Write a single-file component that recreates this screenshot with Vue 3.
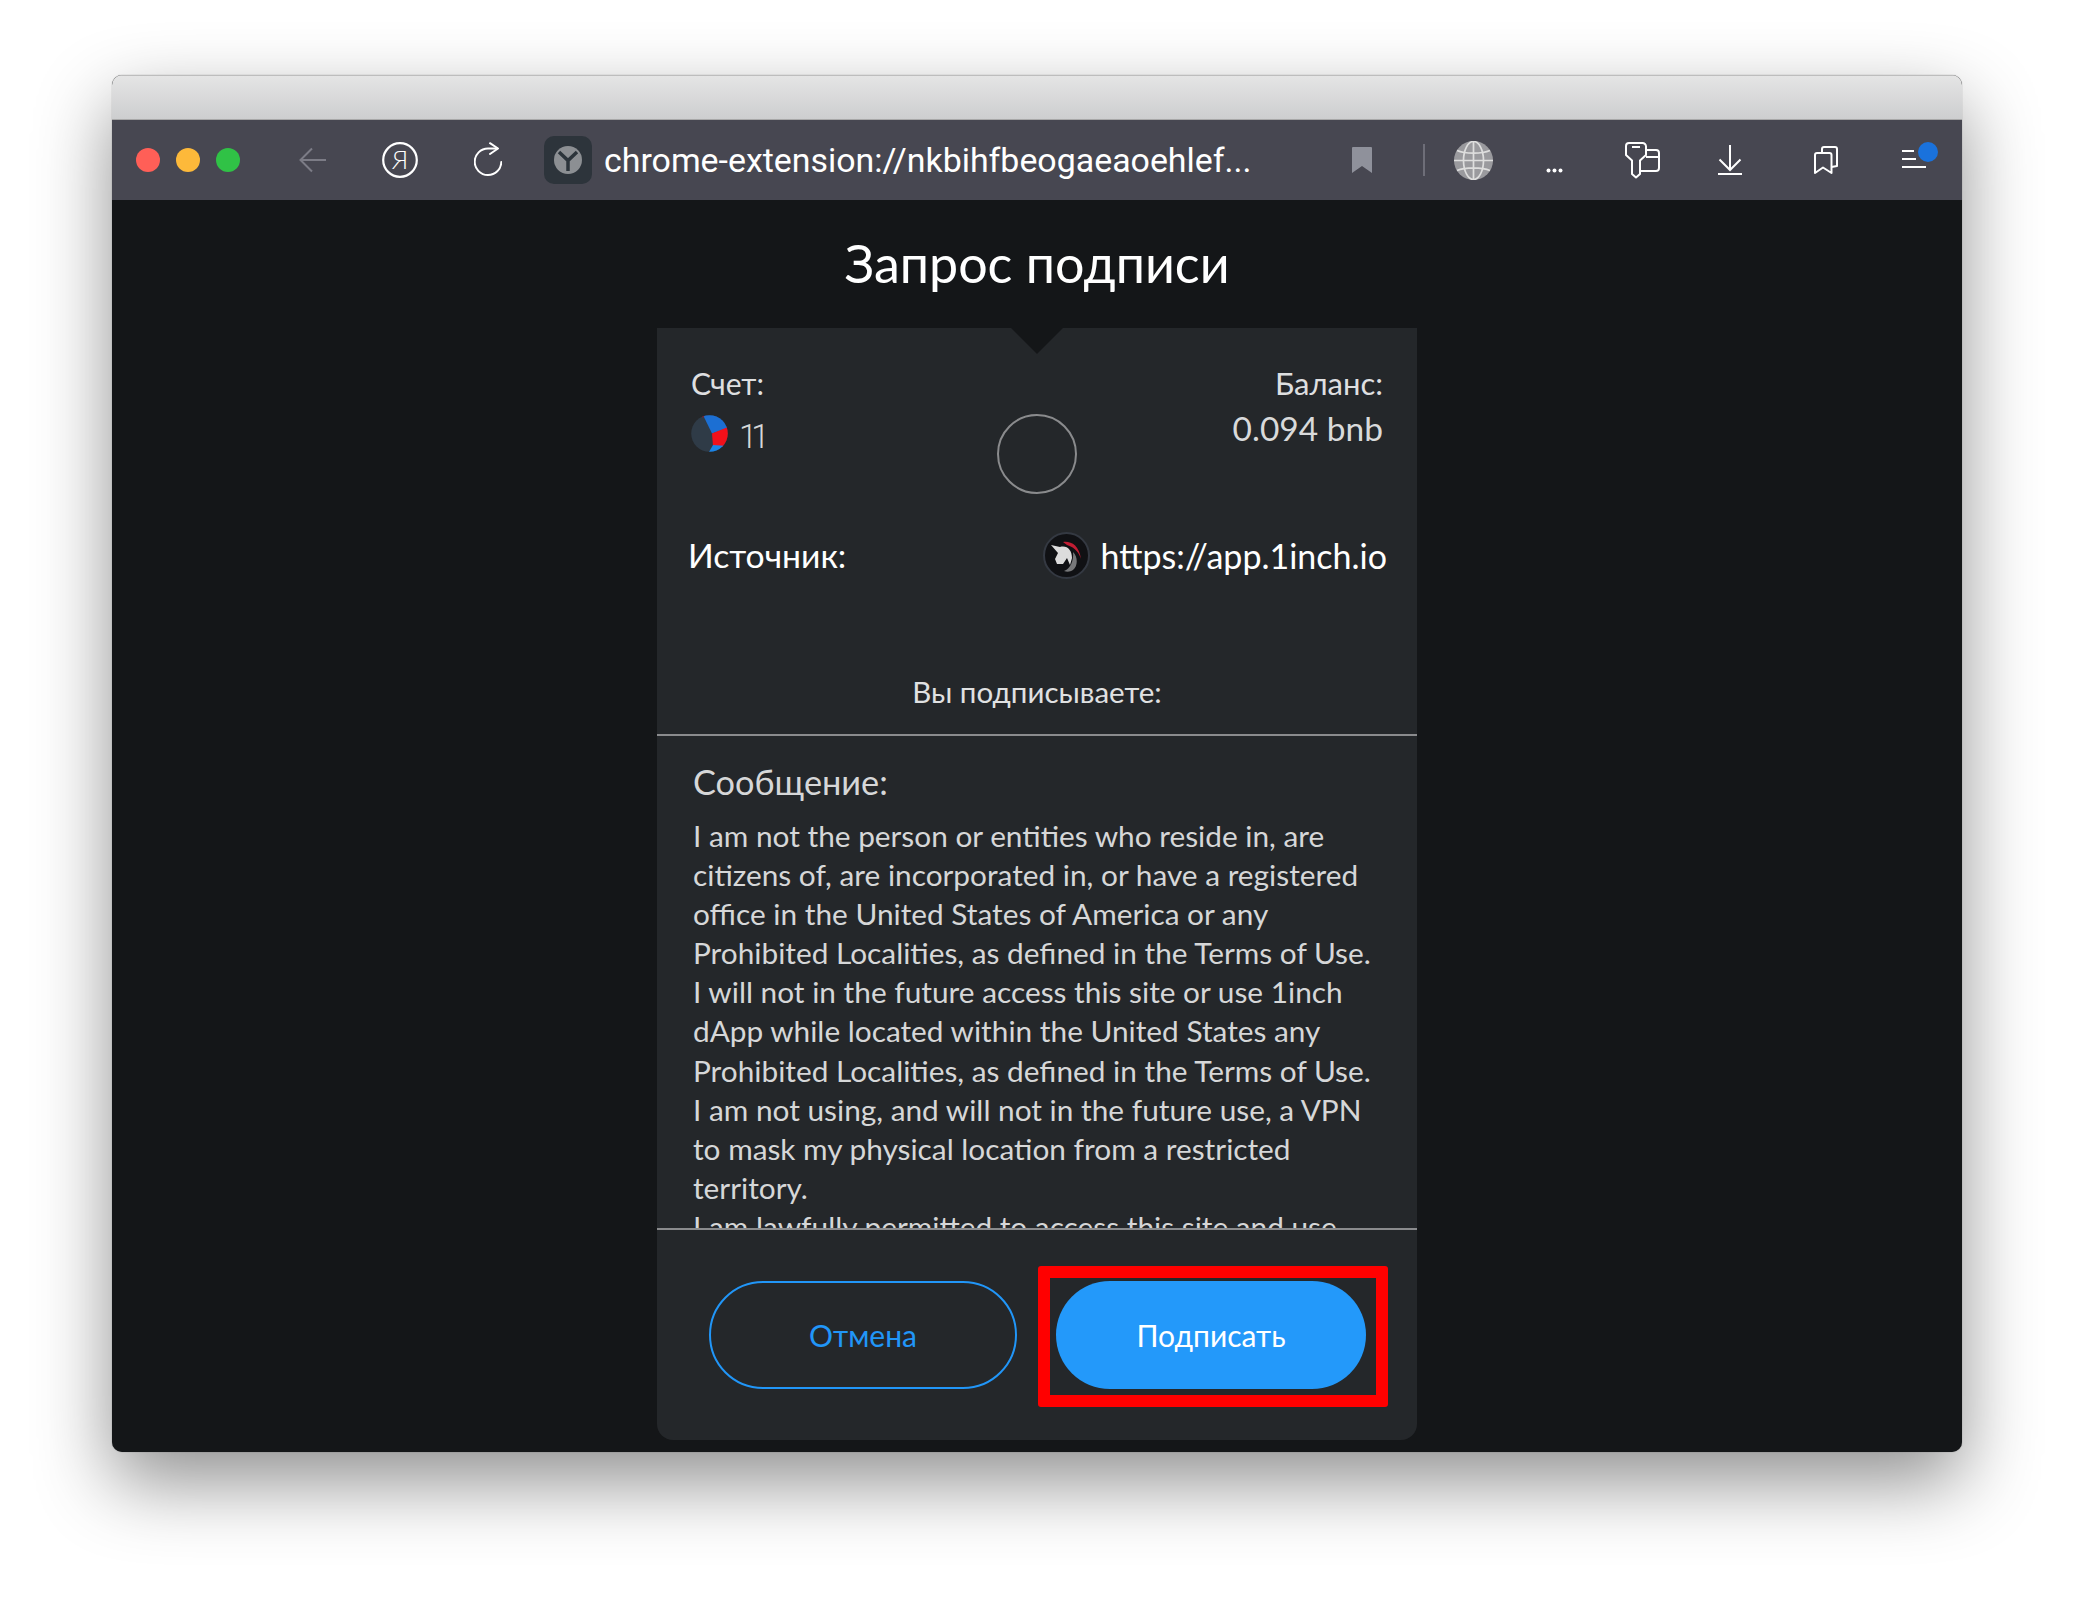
<script setup>
const lines = [
  'I am not the person or entities who reside in, are',
  'citizens of, are incorporated in, or have a registered',
  'office in the United States of America or any',
  'Prohibited Localities, as defined in the Terms of Use.',
  'I will not in the future access this site or use 1inch',
  'dApp while located within the United States any',
  'Prohibited Localities, as defined in the Terms of Use.',
  'I am not using, and will not in the future use, a VPN',
  'to mask my physical location from a restricted',
  'territory.',
  'I am lawfully permitted to access this site and use'
]
</script>

<template>
  <div class="page">
    <div class="window">
      <div class="titlebar"></div>
      <div class="toolbar">
        <span class="light red"></span>
        <span class="light amber"></span>
        <span class="light green"></span>

        <svg class="i-back" viewBox="0 0 28 26" fill="none" stroke="#7c7c86" stroke-width="2">
          <path d="M27 13H2M13 1.500L1.500 13L13 24.500" />
        </svg>
        <svg class="i-ya" viewBox="0 0 36 36" fill="none">
          <circle cx="18" cy="18" r="16.800" stroke="#fff" stroke-width="2.200" />
          <text x="18" y="27" text-anchor="middle" class="ya-letter">Я</text>
        </svg>
        <svg class="i-reload" viewBox="0 0 28 35" fill="none" stroke="#fff" stroke-width="2" stroke-linecap="round" stroke-linejoin="round">
          <path d="M23 6.500H14A13.300 13.300 0 1 0 27.300 20" />
          <path d="M16 1.200L24 6.500L16 12" />
        </svg>
        <div class="favicon">
          <svg viewBox="0 0 28 28" width="28" height="28">
            <circle cx="14" cy="14" r="14" fill="#8c8f93" />
            <path d="M5 6L14 14.500L23 6M14 14.500V25" fill="none" stroke="#2c343b" stroke-width="3.500" />
          </svg>
        </div>
        <div class="url">chrome-extension://nkbihfbeogaeaoehlef...</div>

        <svg class="i-mark" viewBox="0 0 20 26"><path d="M1 0H19A1 1 0 0 1 20 1V26L10 19L0 26V1A1 1 0 0 1 1 0Z" fill="#8f919b" /></svg>
        <span class="sep"></span>
        <svg class="i-globe" viewBox="0 0 39 39" fill="none">
          <circle cx="19.500" cy="19.500" r="19.500" fill="#9a9a9e" />
          <g stroke="#dedede" stroke-width="1.700">
            <path d="M0 19.500H39M19.500 0V39M3 9.500C11 13 28 13 36 9.500M3 29.500C11 26 28 26 36 29.500" />
            <ellipse cx="19.500" cy="19.500" rx="10" ry="19" />
          </g>
        </svg>
        <svg class="i-dots" viewBox="0 0 17 5" fill="#fff">
          <circle cx="2.500" cy="2.500" r="2" /><circle cx="8.500" cy="2.500" r="2" /><circle cx="14.500" cy="2.500" r="2" />
        </svg>
        <svg class="i-key" viewBox="0 0 35 37" fill="none" stroke="#fff" stroke-width="2" stroke-linejoin="round">
          <path d="M4 1H17.500A3.500 3.500 0 0 1 21 4.500V13L15 18.500V32L11 35.500L7 32V18.500L1 13V4A3 3 0 0 1 4 1Z" />
          <path d="M7 5H15M21 8H31A3 3 0 0 1 34 11V26A3 3 0 0 1 31 29H15M21 15H34" />
        </svg>
        <svg class="i-down" viewBox="0 0 24 30" fill="none" stroke="#fff" stroke-width="2">
          <path d="M12 0V24M1.500 14.500L12 25L22.500 14.500" /><path d="M0 29H24" />
        </svg>
        <svg class="i-books" viewBox="0 0 24 28" fill="none" stroke="#fff" stroke-width="2" stroke-linejoin="round">
          <path d="M1 27V9A2 2 0 0 1 3 7H15.500A2 2 0 0 1 17.500 9V27L9 21.500Z" />
          <path d="M8 7V3A2 2 0 0 1 10 1H21A2 2 0 0 1 23 3V20L17.500 21" />
        </svg>
        <div class="menu">
          <span class="bar short"></span>
          <span class="bar mid"></span>
          <span class="bar long"></span>
          <span class="dot"></span>
        </div>
      </div>

      <div class="content">
        <h1 class="title">Запрос подписи</h1>
        <div class="panel">
          <span class="notch"></span>
          <span class="ring"></span>

          <div class="account">
            <div class="acc-col">
              <div class="acc-label">Счет:</div>
              <div class="acc-name">
                <svg class="identicon" viewBox="0 0 37 37">
                  <defs><clipPath id="idc"><circle cx="18.500" cy="18.500" r="18.300" /></clipPath></defs>
                  <g clip-path="url(#idc)">
                    <rect width="37" height="37" fill="#2f3b47" />
                    <path d="M12 0H37V13L21 18.500Z" fill="#1c6fd3" />
                    <path d="M37 12L21 18.500L22 31L37 33Z" fill="#f2101a" />
                    <path d="M22 30L37 31V37H18Z" fill="#1b84e6" />
                    <path d="M10 0H14L12 3Z" fill="#8c1b2d" />
                  </g>
                </svg>
                <span class="acc-num">11</span>
              </div>
            </div>
            <div class="acc-col right">
              <div class="acc-label wide">Баланс:</div>
              <div class="balance">0.094 bnb</div>
            </div>
          </div>

          <div class="source">
            <span class="src-label">Источник:</span>
            <div class="origin">
              <svg class="avatar" viewBox="0 0 47 47">
                <circle cx="23.500" cy="23.500" r="22.500" fill="#101114" stroke="#343942" stroke-width="2" />
                <path d="M20 10C28 9 36 13 38 27C36 21 33 16 24 13Z" fill="#c11d33" />
                <path d="M30 20C35 25 35 34 30 38C27 40 24 40 21 39C27 37 31 29 30 20Z" fill="#77787a" />
                <path d="M8 13L17 15C24 13 29 18 29 26L27 33L24 26L20 32L14 32L12 27L15 21Z" fill="#dcdcdc" />
              </svg>
              <span class="src-url">https://app.1inch.io</span>
            </div>
          </div>

          <div class="signing">Вы подписываете:</div>

          <div class="message">
            <div class="msg-label">Сообщение:</div>
            <div v-for="(l, i) in lines" :key="i" class="msg-line">{{ l }}</div>
          </div>

          <div class="actions">
            <button class="btn ghost">Отмена</button>
            <div class="primary-wrap">
              <button class="btn primary">Подписать</button>
              <span class="highlight"></span>
            </div>
          </div>
        </div>
      </div>
    </div>
  </div>
</template>

<style>
html, body { margin: 0; background: #fff; }
</style>

<style scoped>
.page {
  width: 2074px;
  height: 1600px;
  padding: 75px 112px 0 112px;
  box-sizing: border-box;
  overflow: hidden;
  font-family: Lato, "Noto Sans", sans-serif;
}
.window {
  height: 1377px;
  border-radius: 10px;
  overflow: hidden;
  box-shadow: 0 30px 76px rgba(0, 0, 0, 0.44), 0 0 1px rgba(0, 0, 0, 0.5);
  display: flex;
  flex-direction: column;
  background: #141618;
}
.titlebar {
  height: 44px;
  flex: none;
  background: linear-gradient(#e5e5e5, #cdcecf);
  border-bottom: 1px solid #a8a8a8;
  box-shadow: inset 0 1px #bdbdbd;
}
.toolbar {
  height: 80px;
  flex: none;
  background: #474751;
  display: flex;
  align-items: center;
  padding-left: 24px;
}
.toolbar svg { flex: none; display: block; }
.light { width: 24px; height: 24px; border-radius: 50%; margin-right: 16px; flex: none; }
.red { background: #ff5f57; }
.amber { background: #fdb93a; }
.green { background: #30c246; margin-right: 0; }
.i-back { width: 28px; height: 26px; margin-left: 59px; }
.i-ya { width: 36px; height: 36px; margin-left: 55px; }
.ya-letter { font-family: Lato, sans-serif; font-weight: 300; font-size: 25px; fill: #fff; }
.i-reload { width: 28px; height: 35px; margin-left: 56px; margin-top: -2px; }
.favicon {
  width: 48px;
  height: 48px;
  margin-left: 42px;
  border-radius: 10px;
  background: #2d343b;
  display: flex;
  align-items: center;
  justify-content: center;
  flex: none;
}
.url {
  margin-left: 12px;
  width: 647px;
  color: #fff;
  font: 33.900px Roboto, sans-serif;
  white-space: nowrap;
}
.i-mark { width: 20px; height: 26px; margin-left: 101px; }
.sep { width: 2px; height: 32px; margin-left: 51px; background: #6e6e78; flex: none; }
.i-globe { width: 39px; height: 39px; margin-left: 29px; }
.i-dots { width: 17px; height: 5px; margin-left: 53px; margin-top: 20px; }
.i-key { width: 35px; height: 37px; margin-left: 62px; }
.i-down { width: 24px; height: 30px; margin-left: 58px; }
.i-books { width: 24px; height: 28px; margin-left: 72px; }
.menu { position: relative; width: 24px; height: 18px; margin-left: 64px; margin-top: -2px; display: flex; flex-direction: column; justify-content: space-between; flex: none; }
.bar { height: 2px; background: #fff; display: block; }
.short { width: 12px; }
.mid { width: 14px; }
.long { width: 24px; }
.dot { position: absolute; left: 16px; top: -8px; width: 20px; height: 20px; border-radius: 50%; background: #1a72dc; }

.content { flex: 1; display: flex; flex-direction: column; align-items: center; }
.title {
  margin: 0;
  height: 128px;
  line-height: 126px;
  color: #fff;
  font-size: 52px;
  font-weight: 400;
  flex: none;
}
.panel {
  position: relative;
  width: 760px;
  height: 1112px;
  flex: none;
  background: #24272a;
  border-radius: 0 0 16px 16px;
}
.notch {
  position: absolute;
  left: 354px;
  top: 0;
  border-left: 26px solid transparent;
  border-right: 26px solid transparent;
  border-top: 26px solid #141618;
}
.ring {
  position: absolute;
  left: 340px;
  top: 86px;
  width: 80px;
  height: 80px;
  box-sizing: border-box;
  border: 2px solid #8a8b8d;
  border-radius: 50%;
}
.account {
  height: 169px;
  padding: 39px 34px 0;
  box-sizing: border-box;
  display: flex;
  justify-content: space-between;
}
.acc-label { font-size: 30px; line-height: 32px; color: #dedfe0; }
.acc-label.wide { font-size: 31px; }
.acc-name { display: flex; align-items: center; height: 37px; margin-top: 16px; }
.identicon { width: 37px; height: 37px; }
.acc-num { margin-left: 11px; margin-top: 6px; font: 300 33px/37px Roboto, sans-serif; letter-spacing: -6px; color: #d6d7d8; }
.acc-col.right { text-align: right; }
.balance { margin-top: 10px; font-size: 33.500px; line-height: 38px; color: #d9dadb; }
.source {
  height: 116px;
  padding: 0 30px 0 31px;
  display: flex;
  justify-content: space-between;
  align-items: center;
  box-sizing: border-box;
}
.src-label { font-size: 33.700px; color: #fff; }
.origin { display: flex; align-items: center; }
.avatar { width: 47px; height: 47px; margin-right: 10px; }
.src-url { font-size: 34px; color: #fff; }
.signing {
  height: 123px;
  padding-top: 63px;
  box-sizing: border-box;
  line-height: 32px;
  font-size: 29.500px;
  color: #e0e1e2;
  text-align: center;
  border-bottom: 2px solid #8a8b8d;
}
.message {
  height: 494px;
  padding: 27px 36px 0;
  box-sizing: border-box;
  overflow: hidden;
  color: #d6d7d8;
  border-bottom: 2px solid #8a8b8d;
}
.msg-label { font-size: 34.300px; line-height: 38px; margin-bottom: 15px; }
.msg-line { font-size: 29.800px; line-height: 39.100px; white-space: nowrap; }
.actions {
  padding: 51px 0 0 52px;
  display: flex;
  gap: 39px;
}
.btn {
  height: 108px;
  border-radius: 54px;
  font-family: inherit;
  font-size: 30px;
  display: block;
  padding: 0;
}
.ghost {
  width: 308px;
  background: transparent;
  border: 2px solid #2196f8;
  color: #2196f8;
}
.primary-wrap { position: relative; }
.primary {
  width: 310px;
  background: #2399fa;
  border: none;
  color: #fff;
}
.highlight {
  position: absolute;
  left: -18px;
  right: -22px;
  top: -15px;
  bottom: -18px;
  border: 12px solid #ff0000;
  border-radius: 3px;
}
</style>
